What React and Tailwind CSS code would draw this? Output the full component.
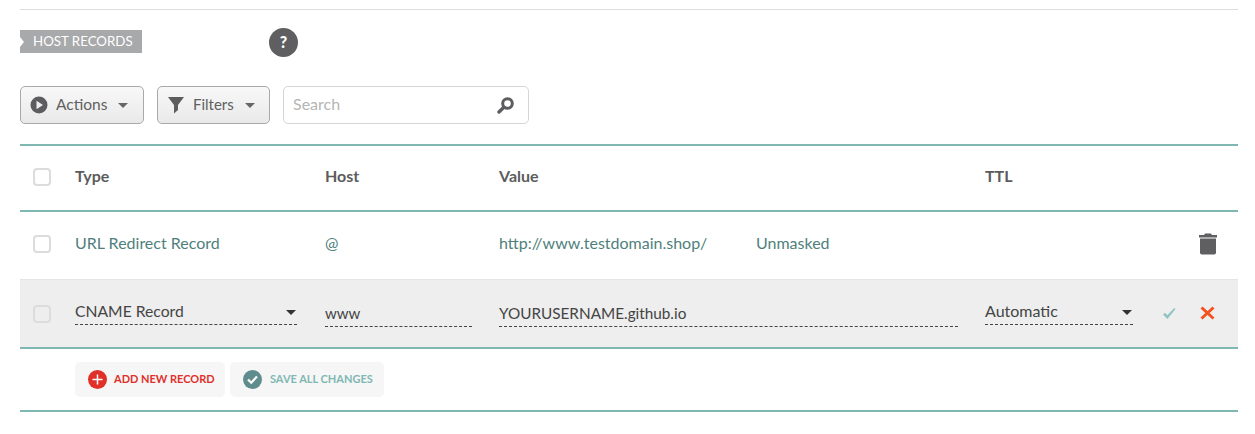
const Caret = ({ className = "" }) => (
  <svg width="10" height="5" viewBox="0 0 10 5" className={className}>
    <path d="M0 0h10L5 5z" fill="currentColor" />
  </svg>
);

const Checkbox = ({ dim }) => (
  <div className={`w-[18px] h-[18px] shrink-0 rounded-[4px] border-2 border-[#dcdcdc] ${dim ? "bg-[#eeeeee]" : "bg-white"}`} />
);

const ToolButton = ({ width, icon, label, size, lift }) => (
  <button className={`${width} ${size} h-[38px] flex items-center rounded-[5px] border border-[#a9a9a9] bg-gradient-to-b from-[#f8f8f8] to-[#e9e9e9] text-[#5f5f5f]`}>
    {icon}
    <span className={lift}>{label}</span>
    <Caret className="ml-[11px] text-[#666666]" />
  </button>
);

// dashed underline field used in the editable row
const Field = ({ width, text, caret, pull, size, lift }) => (
  <div className={`${width} ${pull} ${size} flex items-center justify-between border-b border-dashed border-[#444444] h-[24px] text-[#444444]`}>
    <span className={lift}>{text}</span>
    {caret && <Caret className="mr-[1px] text-[#333333]" />}
  </div>
);

export default function App() {
  return (
    <div className="w-[1255px] h-[434px] bg-white font-['Lato','Open_Sans',sans-serif] overflow-hidden pt-[9px] px-[20px] pr-[17px]">
      <div className="h-px bg-[#dddddd]" />

      <div className="flex items-center h-[62px] mt-[1px]">
        <div className="relative w-[122px] h-[23px] bg-[#a8a9ab] text-white text-[13.3px] leading-[23px] pl-[13px] mt-[-2px]">
          <span className="absolute left-0 top-[7px] w-0 h-0 border-y-[5px] border-y-transparent border-l-[4px] border-l-white" />
          HOST RECORDS
        </div>
        <div className="ml-[127px] w-[29px] h-[29px] rounded-full bg-[#5f5f61] text-white text-[16px] font-black flex items-center justify-center">?</div>
      </div>

      <div className="flex items-center gap-[13px] mt-[13px]">
        <ToolButton
          width="w-[124px]"
          size="text-[15.5px]"
          lift="pb-0"
          label="Actions"
          icon={
            <svg width="18" height="18" viewBox="0 0 18 18" className="ml-[9px] mr-[8px]">
              <circle cx="9" cy="9" r="8.5" fill="#5d5d5f" />
              <path d="M6.5 4.800 13 9l-6.500 4.200z" fill="#eeeeee" />
            </svg>
          }
        />
        <ToolButton
          width="w-[113px]"
          size="text-[15px]"
          lift="pb-[2px]"
          label="Filters"
          icon={
            <svg width="18" height="18" viewBox="0 0 18 18" className="ml-[9px] mr-[8px]">
              <path d="M1 1h16l-6 8v5l-4 3.500V9z" fill="#5d5d5f" />
            </svg>
          }
        />
        <div className="w-[246px] h-[38px] flex items-center justify-between rounded-[5px] border border-[#d5d5d5] pl-[9px] pr-[14px] text-[16px] text-[#b5b5b5]">
          <span className="pb-[2px]">Search</span>
          <svg width="17" height="17" viewBox="0 0 17 17">
            <circle cx="10.500" cy="6.500" r="4.800" fill="none" stroke="#5d5d5f" strokeWidth="3" />
            <path d="M6.800 10.200 2 15" stroke="#5d5d5f" strokeWidth="3.400" strokeLinecap="round" />
          </svg>
        </div>
      </div>

      <div className="mt-[20px] border-t-2 border-[#7fb8b3]">
        <div className="flex items-center h-[64px] pl-[13px] pb-[3px] text-[16px] font-bold text-[#5c5c5c]">
          <Checkbox />
          <div className="ml-[24px] w-[250px] pb-[2px]">Type</div>
          <div className="w-[174px] pb-[2px]">Host</div>
          <div className="w-[486px] pb-[2px]">Value</div>
          <div className="pb-[2px]">TTL</div>
        </div>

        <div className="flex items-center h-[69px] pl-[13px] pb-[4px] border-t-2 border-[#7fb8b3] text-[16px] text-[#4f7f7c]">
          <Checkbox />
          <div className="ml-[24px] w-[250px] pb-[2px]">URL Redirect Record</div>
          <div className="w-[174px] pb-[2px]">@</div>
          <div className="w-[257px] pb-[2px]">http://www.testdomain.shop/</div>
          <div className="flex-1 pb-[2px]">Unmasked</div>
          <svg width="18" height="23" viewBox="0 0 18 23" className="mr-[21px]">
            <path d="M6 1.500h6l1 1.500h5v2.400H0V3h5z" fill="#5f5f61" />
            <path d="M1 6.500h16v14.200a1.800 1.800 0 0 1-1.800 1.800H2.800A1.800 1.800 0 0 1 1 20.700z" fill="#5f5f61" />
          </svg>
        </div>

        <div className="flex items-center h-[68px] pl-[13px] bg-[#eeeeee] border-t border-[#e4e4e4]">
          <Checkbox dim />
          <div className="ml-[24px] w-[250px]">
            <Field width="w-[222px]" size="text-[15.7px]" lift="pb-0" pull="mt-[-2px]" text="CNAME Record" caret />
          </div>
          <div className="w-[174px]">
            <Field width="w-[147px]" size="text-[15px]" lift="pb-[2px]" pull="mt-[3px]" text="www" />
          </div>
          <div className="w-[486px]">
            <Field width="w-[459px]" size="text-[15.3px]" lift="pb-[2px]" pull="mt-[3px]" text="YOURUSERNAME.github.io" />
          </div>
          <Field width="w-[148px]" size="text-[16px]" lift="pb-[2px]" pull="mt-[-2px]" text="Automatic" caret />
          <svg width="14" height="13" viewBox="0 0 14 13" className="ml-[29px] mt-[-1px]">
            <path d="M1 7.500l2.200-1.700 2 2.400L12.300 1 13.500 2 5.400 12z" fill="#8fc4c0" />
          </svg>
          <svg width="15" height="14" viewBox="0 0 15 14" className="ml-[24px] mt-[-1px]">
            <path d="M1.500 1.500 13.500 12.500M13.500 1.500 1.500 12.500" stroke="#f4511e" strokeWidth="3" />
          </svg>
        </div>

        <div className="border-t-2 border-[#7fb8b3] pl-[55px] pt-[13px] pb-[13px] flex gap-[5px]">
          <button className="w-[150px] h-[35px] flex items-center rounded-[5px] bg-[#f6f6f6] text-[11px] font-bold text-[#e0302a]">
            <svg width="19" height="19" viewBox="0 0 19 19" className="ml-[13px] mr-[7px]">
              <circle cx="9.500" cy="9.500" r="9.500" fill="#e0302a" />
              <path d="M9.500 4.500v10M4.500 9.500h10" stroke="#ffffff" strokeWidth="1.500" />
            </svg>
            ADD NEW RECORD
          </button>
          <button className="w-[154px] h-[35px] flex items-center rounded-[5px] bg-[#f6f6f6] text-[11px] font-bold text-[#7fb8b3]">
            <svg width="19" height="19" viewBox="0 0 19 19" className="ml-[13px] mr-[8px]">
              <circle cx="9.500" cy="9.500" r="9.500" fill="#5f8d8d" />
              <path d="M5 9.500l3.200 3.200L14 6.500" stroke="#ffffff" strokeWidth="2.200" fill="none" />
            </svg>
            SAVE ALL CHANGES
          </button>
        </div>

        <div className="h-[2px] bg-[#7fb8b3]" />
      </div>
    </div>
  );
}
